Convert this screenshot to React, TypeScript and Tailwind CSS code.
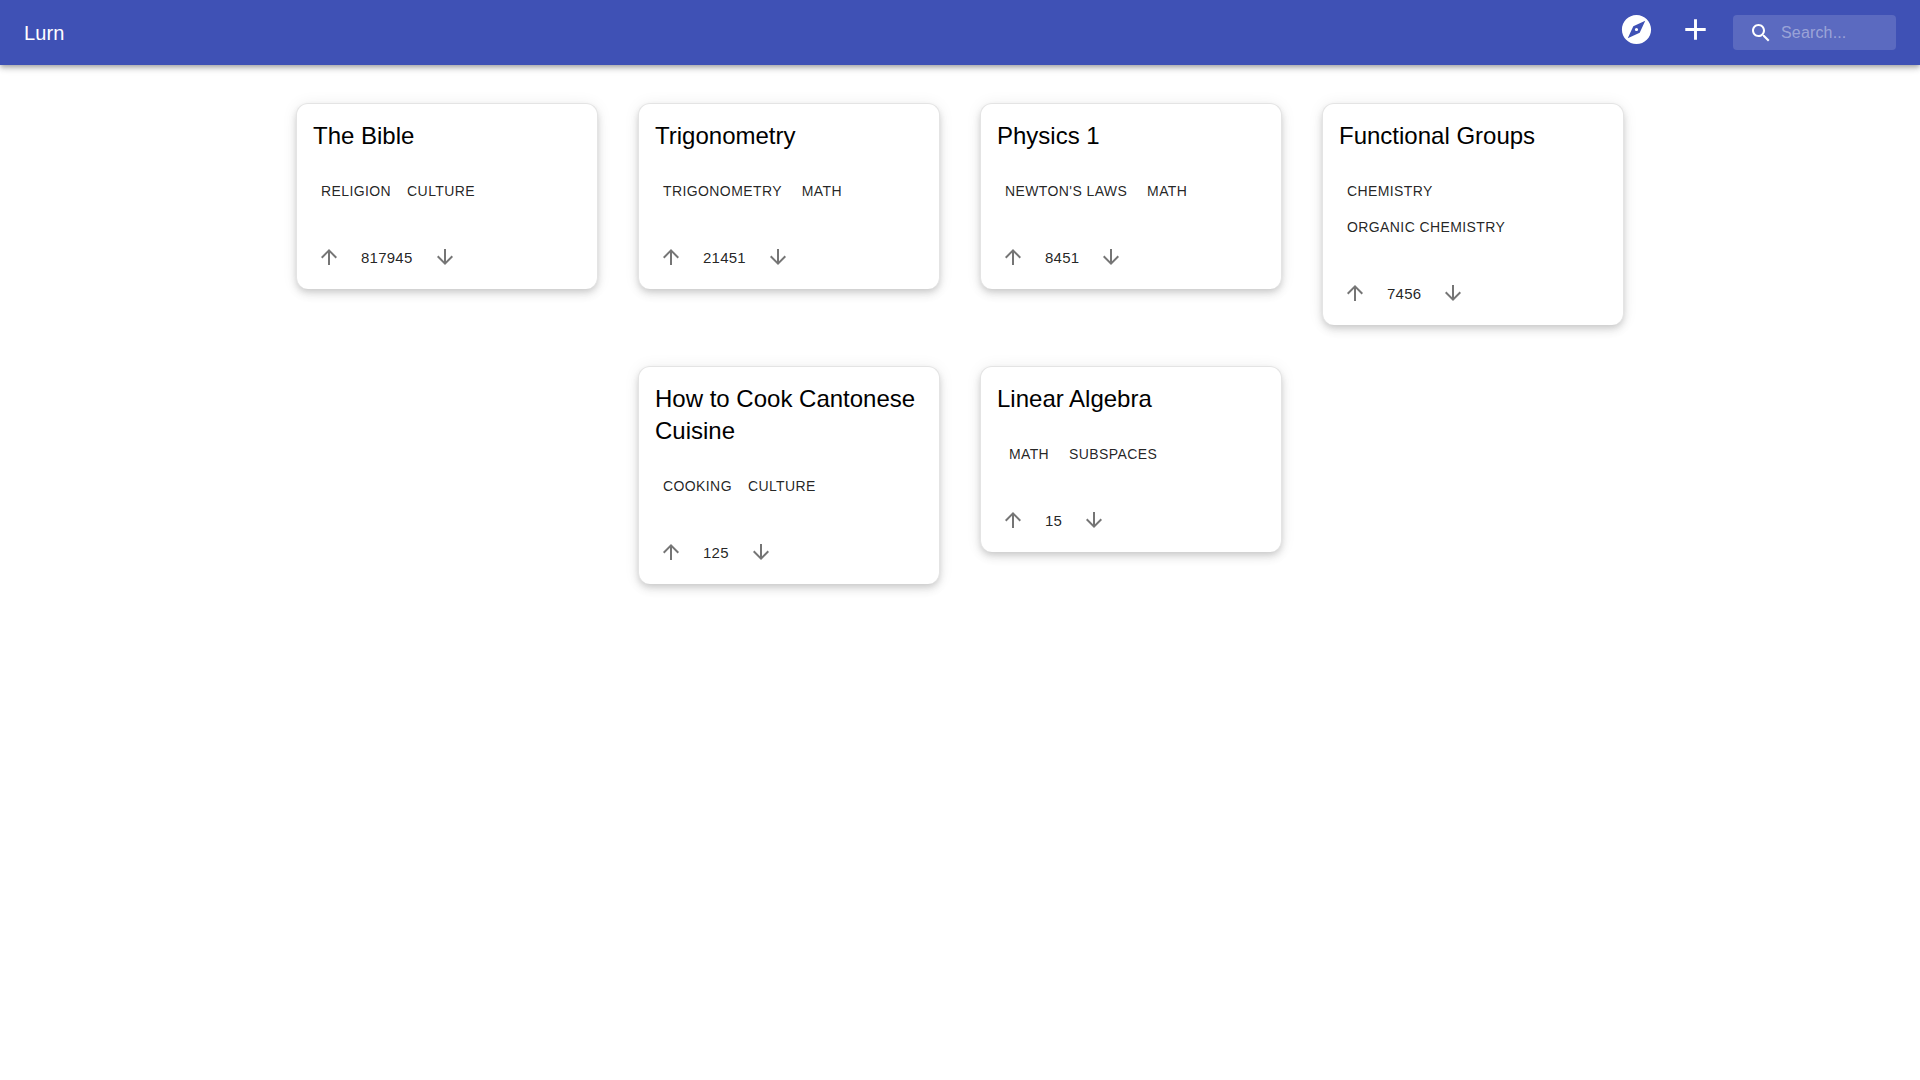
const DECKS = [
  { title: "The Bible", tags: ["Religion", "Culture"], votes: 817945 },
  { title: "Trigonometry", tags: ["Trigonometry", "Math"], votes: 21451 },
  { title: "Physics 1", tags: ["Newton's Laws", "Math"], votes: 8451 },
  { title: "Functional Groups", tags: ["Chemistry", "Organic Chemistry"], votes: 7456 },
  { title: "How to Cook Cantonese Cuisine", tags: ["Cooking", "Culture"], votes: 125 },
  { title: "Linear Algebra", tags: ["Math", "Subspaces"], votes: 15 },
];

function Icon({ d, className }: { d: string; className: string }) {
  return (
    <svg viewBox="0 0 24 24" fill="currentColor" className={className}>
      <path d={d} />
    </svg>
  );
}

const ARROW_UP = "M4 12l1.41 1.41L11 7.83V20h2V7.83l5.58 5.59L20 12l-8-8-8 8z";
const ARROW_DOWN = "M20 12l-1.41-1.41L13 16.17V4h-2v12.17l-5.58-5.59L4 12l8 8 8-8z";
const EXPLORE =
  "M12 10.9c-.61 0-1.1.49-1.1 1.1s.49 1.1 1.1 1.1c.61 0 1.1-.49 1.1-1.1s-.49-1.1-1.1-1.1zM12 2C6.48 2 2 6.48 2 12s4.48 10 10 10 10-4.48 10-10S17.52 2 12 2zm2.19 12.19L6 18l3.81-8.19L18 6l-3.81 8.19z";
const PLUS = "M19 13h-6v6h-2v-6H5v-2h6V5h2v6h6v2z";
const SEARCH =
  "M15.5 14h-.79l-.28-.27C15.41 12.59 16 11.11 16 9.5 16 5.91 13.09 3 9.5 3S3 5.91 3 9.5 5.91 16 9.5 16c1.61 0 3.09-.59 4.23-1.57l.27.28v.79l5 4.99L20.49 19l-4.99-5zm-6 0C7.01 14 5 11.99 5 9.5S7.01 5 9.5 5 14 7.01 14 9.5 11.99 14 9.5 14z";

function Header() {
  return (
    <header className="flex h-[65px] items-center bg-[#3f51b5] pl-6 pr-6 text-white shadow-[0_2px_4px_-1px_rgba(0,0,0,0.2),0_4px_5px_0_rgba(0,0,0,0.14),0_1px_10px_0_rgba(0,0,0,0.12)]">
      <h1 className="text-[20px] font-normal leading-[32px] tracking-[0.0075em]">Lurn</h1>
      <div className="ml-auto flex self-start">
        <button className="p-3">
          <Icon d={EXPLORE} className="h-[35px] w-[35px]" />
        </button>
        <button className="p-3">
          <Icon d={PLUS} className="h-[35px] w-[35px]" />
        </button>
      </div>
      <div className="ml-2 flex h-[35px] w-[163px] items-center rounded bg-white/15">
        <div className="flex w-[48px] justify-center pl-[7px]">
          <Icon d={SEARCH} className="h-6 w-6" />
        </div>
        <input
          placeholder="Search..."
          className="w-[115px] bg-transparent text-base tracking-[0.01em] outline-none placeholder:text-white/40"
        />
      </div>
    </header>
  );
}

function DeckCard({ title, tags, votes }: (typeof DECKS)[number]) {
  return (
    <div className="mx-5 mb-[21px] mt-5 w-[302px] self-start rounded-xl border-x border-t border-[#e4e4e4] bg-white shadow-[0_3px_6px_-1px_rgba(0,0,0,0.12),0_6px_10px_0_rgba(0,0,0,0.08),0_1px_16px_0_rgba(0,0,0,0.07)]">
      <div className="px-4 pb-6 pt-4">
        <h2 className="mb-[21px] text-[24px] leading-[32px] text-black">{title}</h2>
        <div className="flex flex-wrap">
          {tags.map((tag) => (
            <span
              key={tag}
              className="inline-flex h-9 min-w-16 items-center justify-center px-2 text-sm uppercase tracking-[0.02857em] text-black/[0.87]"
            >
              {tag}
            </span>
          ))}
        </div>
      </div>
      <div className="flex items-center gap-2 px-2 pb-2">
        <button className="p-3 text-black/[0.54]">
          <Icon d={ARROW_UP} className="h-6 w-6" />
        </button>
        <span className="pt-0.5 text-[15px] tracking-[0.25px] text-black/[0.87]">{votes}</span>
        <button className="p-3 text-black/[0.54]">
          <Icon d={ARROW_DOWN} className="h-6 w-6" />
        </button>
      </div>
    </div>
  );
}

export default function App() {
  return (
    <div className="min-h-screen bg-white font-['Liberation_Sans',sans-serif]">
      <Header />
      <main className="mx-auto flex w-[1368px] flex-wrap justify-center pt-[18px]">
        {DECKS.map((deck) => (
          <DeckCard key={deck.title} {...deck} />
        ))}
      </main>
    </div>
  );
}
